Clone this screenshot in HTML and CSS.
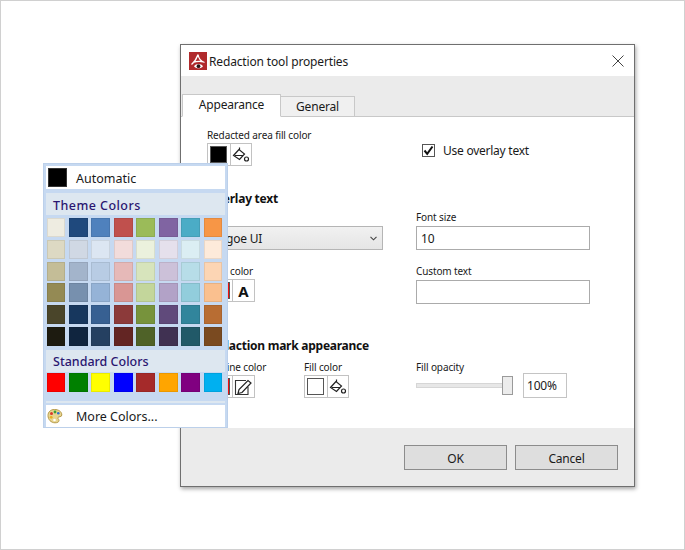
FILE: index.html
```html
<!DOCTYPE html>
<html>
<head>
    <meta charset="utf-8" />
    <title>Redaction tool properties</title>
    <link rel="stylesheet" href="styles.css">
</head>
<body>
    <div class="dialog">
        <div class="title_bar">
            <svg class="app_icon" width="18" height="18" viewBox="0 0 18 18">
                <rect width="18" height="18" fill="#b02a2c" />
                <path d="M9 2.5C8 5 7 9 2.5 12.5M9 2.5C9.5 6 11 9 15.5 10.5M4 10.5C7 9.5 11 9 14.5 10" fill="none" stroke="#fff" stroke-width="1.3" />
                <path d="M5 14.2C7 11.4 12 11.4 14 14.2C12 17 7 17 5 14.2Z" fill="#fff" />
                <circle cx="9.5" cy="14.2" r="1.9" fill="#2a1414" />
            </svg>
            <span class="title_text">Redaction tool properties</span>
            <svg class="close_icon" width="12" height="12" viewBox="0 0 12 12">
                <path d="M.5 .5L11.5 11.5M11.5 .5L.5 11.5" fill="none" stroke="#444" stroke-width="1" />
            </svg>
        </div>

        <div class="tab_strip">
            <div class="tab tab_active">Appearance</div>
            <div class="tab">General</div>
        </div>

        <div class="content">
            <div class="form_grid">
                <div>
                    <div class="label label_tight">Redacted area fill color</div>
                    <div class="btn_group">
                        <div class="cell"><span class="color_box box_black"></span></div>
                        <div class="cell">
                            <svg width="18" height="18" viewBox="0 0 18 18"><use href="#bucket" /></svg>
                        </div>
                    </div>
                </div>
                <label class="check_row">
                    <span class="check_box">
                        <svg width="11" height="11" viewBox="0 0 11 11"><path d="M1.5 5.5L4.2 8.8L9.5 1.5" fill="none" stroke="#111" stroke-width="2" /></svg>
                    </span>
                    Use overlay text
                </label>
            </div>

            <div class="heading heading_first">Overlay text</div>
            <div class="form_grid">
                <div>
                    <div class="label">Font</div>
                    <div class="select_box">
                        <span>Segoe UI</span>
                        <svg width="7" height="5" viewBox="0 0 7 5"><path d="M.5 .8L3.5 3.8L6.5 .8" fill="none" stroke="#444" stroke-width="1.1" /></svg>
                    </div>
                </div>
                <div>
                    <div class="label">Font size</div>
                    <div class="text_input">10</div>
                </div>
                <div class="row_gap">
                    <div class="label label_tight">Font color</div>
                    <div class="btn_group">
                        <div class="cell cell_wide"><span class="color_box box_red"></span></div>
                        <div class="cell cell_letter">A</div>
                    </div>
                </div>
                <div class="row_gap">
                    <div class="label">Custom text</div>
                    <div class="text_input"></div>
                </div>
            </div>

            <div class="heading heading_second">Redaction mark appearance</div>
            <div class="mark_grid">
                <div>
                    <div class="label label_tight">Outline color</div>
                    <div class="btn_group">
                        <div class="cell cell_wide"><span class="color_box box_red"></span></div>
                        <div class="cell">
                            <svg width="18" height="18" viewBox="0 0 18 18">
                                <path d="M12 2.5H1.5V16.5H14V9" fill="none" stroke="#333" stroke-width="1.1" />
                                <path d="M4 15.5L5 11.5L14 2.5L17 5L8 14.5Z" fill="#fff" stroke="#222" stroke-width="1.2" />
                            </svg>
                        </div>
                    </div>
                </div>
                <div>
                    <div class="label label_tight">Fill color</div>
                    <div class="btn_group">
                        <div class="cell"><span class="color_box box_empty"></span></div>
                        <div class="cell">
                            <svg width="18" height="18" viewBox="0 0 18 18"><use href="#bucket" /></svg>
                        </div>
                    </div>
                </div>
                <div>
                    <div class="label label_tight">Fill opacity</div>
                    <div class="opacity_row">
                        <div class="slider"><div class="slider_thumb"></div></div>
                        <div class="percent_input">100%</div>
                    </div>
                </div>
            </div>
        </div>

        <div class="footer">
            <div class="push_btn">OK</div>
            <div class="push_btn">Cancel</div>
        </div>
    </div>

    <div class="color_menu">
        <div class="menu_row">
            <span class="auto_box"></span>
            <span class="menu_text">Automatic</span>
        </div>
        <div class="menu_head menu_head_theme">Theme Colors</div>
        <div class="swatch_grid">
            <span class="swatch" style="background:#eeece1"></span>
            <span class="swatch" style="background:#1f497d"></span>
            <span class="swatch" style="background:#4f81bd"></span>
            <span class="swatch" style="background:#c0504d"></span>
            <span class="swatch" style="background:#9bbb59"></span>
            <span class="swatch" style="background:#8064a2"></span>
            <span class="swatch" style="background:#4bacc6"></span>
            <span class="swatch" style="background:#f79646"></span>

            <span class="swatch" style="background:#ddd9c3"></span>
            <span class="swatch" style="background:#d0d8e4"></span>
            <span class="swatch" style="background:#dce6f2"></span>
            <span class="swatch" style="background:#f2dcdb"></span>
            <span class="swatch" style="background:#ebf1dd"></span>
            <span class="swatch" style="background:#e5e0ec"></span>
            <span class="swatch" style="background:#dbeef3"></span>
            <span class="swatch" style="background:#fdeada"></span>

            <span class="swatch" style="background:#c4bd97"></span>
            <span class="swatch" style="background:#a3b4cb"></span>
            <span class="swatch" style="background:#b8cce4"></span>
            <span class="swatch" style="background:#e6b9b8"></span>
            <span class="swatch" style="background:#d7e4bc"></span>
            <span class="swatch" style="background:#ccc1d9"></span>
            <span class="swatch" style="background:#b7dde8"></span>
            <span class="swatch" style="background:#fcd5b4"></span>

            <span class="swatch" style="background:#948a54"></span>
            <span class="swatch" style="background:#7790ae"></span>
            <span class="swatch" style="background:#95b3d7"></span>
            <span class="swatch" style="background:#d99694"></span>
            <span class="swatch" style="background:#c3d69b"></span>
            <span class="swatch" style="background:#b2a2c7"></span>
            <span class="swatch" style="background:#92cddc"></span>
            <span class="swatch" style="background:#fac08f"></span>

            <span class="swatch" style="background:#4a452a"></span>
            <span class="swatch" style="background:#17375e"></span>
            <span class="swatch" style="background:#376092"></span>
            <span class="swatch" style="background:#8c3a3a"></span>
            <span class="swatch" style="background:#77933c"></span>
            <span class="swatch" style="background:#604a7b"></span>
            <span class="swatch" style="background:#31859c"></span>
            <span class="swatch" style="background:#b86d33"></span>

            <span class="swatch" style="background:#1d1b10"></span>
            <span class="swatch" style="background:#10253f"></span>
            <span class="swatch" style="background:#254061"></span>
            <span class="swatch" style="background:#632523"></span>
            <span class="swatch" style="background:#4f6228"></span>
            <span class="swatch" style="background:#403152"></span>
            <span class="swatch" style="background:#215968"></span>
            <span class="swatch" style="background:#7a4a20"></span>
        </div>
        <div class="menu_head menu_head_standard">Standard Colors</div>
        <div class="swatch_grid swatch_grid_standard">
            <span class="swatch" style="background:#ff0000"></span>
            <span class="swatch" style="background:#008000"></span>
            <span class="swatch" style="background:#ffff00"></span>
            <span class="swatch" style="background:#0000ff"></span>
            <span class="swatch" style="background:#a52a2a"></span>
            <span class="swatch" style="background:#ffa500"></span>
            <span class="swatch" style="background:#800080"></span>
            <span class="swatch" style="background:#00b0f0"></span>
        </div>
        <div class="menu_sep"></div>
        <div class="menu_row menu_row_more">
            <svg class="palette_icon" width="16" height="16" viewBox="0 0 16 16">
                <path d="M7.5 1.5C3.5 1.5 1 4 1 7.5C1 11.5 4 14.8 8 14.8C10.5 14.8 12 14 12 12.5C12 11 10.5 10.8 11 9.5C11.5 8.3 14.8 9.3 14.8 7C14.8 3.5 11.5 1.5 7.5 1.5Z" fill="#e8d590" stroke="#b59a4a" stroke-width="1" />
                <circle cx="4.5" cy="5.5" r="1.5" fill="#d93a2b" />
                <circle cx="8" cy="4" r="1.4" fill="#3f9e3a" />
                <circle cx="11.3" cy="5.3" r="1.3" fill="#2f6fd0" />
                <circle cx="4.2" cy="9.3" r="1.4" fill="#e8b020" />
                <circle cx="7.5" cy="12" r="1.3" fill="#fff" />
            </svg>
            <span class="menu_text">More Colors...</span>
        </div>
    </div>

    <svg class="svg_defs" width="0" height="0">
        <symbol id="bucket" viewBox="0 0 18 18">
            <path d="M7.5 1.5V4M7 3.5L1.5 9.5L7.5 13.5L12.5 8Z" fill="#fff" stroke="#222" stroke-width="1.2" />
            <path d="M3 9.5H11" stroke="#222" stroke-width="1" />
            <circle cx="14.5" cy="13" r="2" fill="#fff" stroke="#222" stroke-width="1.2" />
        </symbol>
    </svg>
</body>
</html>
```
FILE: styles.css
```css
*
{
    margin: 0;
    padding: 0;
    box-sizing: border-box;
}

body
{
    position: relative;
    width: 685px;
    height: 550px;
    overflow: hidden;
    background: #fff;
    border: 1px solid #d0d0d0;
    font-family: "Noto Sans", "Liberation Sans", sans-serif;
    letter-spacing: -0.2px;
    color: #1a1a1a;
}

.svg_defs
{
    position: absolute;
}

/* dialog window */
.dialog
{
    position: absolute;
    left: 179px;
    top: 43px;
    width: 455px;
    height: 443px;
    display: flex;
    flex-direction: column;
    background: #fff;
    border: 1px solid #6f6f6f;
    box-shadow: 1px 2px 4px rgba(0, 0, 0, 0.35);
}

.title_bar
{
    flex: none;
    height: 31px;
    display: flex;
    align-items: center;
    padding: 0 10px 0 8px;
    font-size: 12px;
    letter-spacing: -0.15px;
}

.title_text
{
    margin: 2px 0 0 2px;
    flex: 1;
}

.tab_strip
{
    flex: none;
    height: 41px;
    display: flex;
    align-items: flex-end;
    padding-left: 1px;
    background: #ebebeb;
    border-bottom: 1px solid #c8c8c8;
}

.tab
{
    width: 74px;
    height: 21px;
    margin-bottom: -1px;
    text-align: center;
    font-size: 12px;
    line-height: 19px;
    background: #f0f0f0;
    border: 1px solid #c8c8c8;
    border-left: none;
}

.tab_active
{
    width: 99px;
    height: 23px;
    background: #fff;
    border: 1px solid #c8c8c8;
    border-bottom: 1px solid #fff;
    position: relative;
}

.content
{
    flex: 1;
    padding: 11px 0 0 26px;
}

.form_grid
{
    display: grid;
    grid-template-columns: 209px 174px;
}

.label
{
    height: 14px;
    margin-bottom: 2px;
    font-size: 10px;
    letter-spacing: -0.12px;
    line-height: 14px;
}

.label_tight
{
    margin-bottom: 1px;
}

.btn_group
{
    display: flex;
    width: fit-content;
    height: 23px;
    border: 1px solid #c2c2c2;
}

.cell
{
    width: 21.5px;
    display: flex;
    align-items: center;
    justify-content: center;
}

.cell + .cell
{
    border-left: 1px solid #c2c2c2;
}

.cell_wide
{
    width: 24px;
    justify-content: flex-start;
}

.cell_wide .color_box
{
    width: 20px;
    margin-left: 2px;
}

.cell_letter
{
    width: 22px;
    font-size: 15px;
    font-weight: 700;
    letter-spacing: 0;
    color: #111;
}

.color_box
{
    width: 17px;
    height: 17px;
    border: 1px solid #555;
}

.box_black
{
    background: #000;
}

.box_red
{
    background: #f01010;
}

.box_empty
{
    background: #fff;
}

.check_row
{
    display: flex;
    align-items: center;
    height: 16px;
    margin: 14px 0 0 6px;
    font-size: 12px;
    letter-spacing: -0.25px;
    white-space: nowrap;
}

.check_box
{
    width: 13px;
    height: 13px;
    margin-right: 8px;
    display: flex;
    align-items: center;
    justify-content: center;
    border: 1px solid #555;
    background: #fff;
}

.heading
{
    height: 16px;
    font-size: 12px;
    font-weight: 700;
    letter-spacing: -0.25px;
    line-height: 16px;
    color: #111;
}

.heading_first
{
    margin-top: 25px;
    margin-bottom: 3px;
}

.heading_second
{
    margin-top: 34px;
    margin-bottom: 6px;
}

.select_box
{
    width: 176px;
    height: 24px;
    display: flex;
    align-items: center;
    justify-content: space-between;
    padding: 0 5px;
    font-size: 12px;
    background: linear-gradient(#f1f1f1, #e5e5e5);
    border: 1px solid #b5b5b5;
}

.text_input
{
    width: 174px;
    height: 24px;
    padding-left: 4px;
    font-size: 12px;
    line-height: 24px;
    border: 1px solid #ababab;
    background: #fff;
}

.row_gap
{
    margin-top: 14px;
}

.mark_grid
{
    display: grid;
    grid-template-columns: 97px 112px 160px;
}

.opacity_row
{
    display: flex;
    align-items: center;
    height: 26px;
    margin-top: -3px;
}

.slider
{
    position: relative;
    width: 97px;
    height: 5px;
    background: #e7e7e7;
    border: 1px solid #d6d6d6;
}

.slider_thumb
{
    position: absolute;
    right: -1px;
    top: -8px;
    width: 11px;
    height: 19px;
    background: #ececec;
    border: 1px solid #9a9a9a;
}

.percent_input
{
    width: 44px;
    height: 25px;
    margin-left: 10px;
    padding-left: 3px;
    font-size: 12px;
    line-height: 23px;
    border: 1px solid #c4c4c4;
}

.footer
{
    flex: none;
    height: 58px;
    display: flex;
    justify-content: flex-end;
    gap: 8px;
    padding: 17px 16px 0 0;
    background: #ebebeb;
}

.push_btn
{
    width: 103px;
    height: 25px;
    text-align: center;
    font-size: 12px;
    line-height: 25px;
    background: #dedede;
    border: 1px solid #8c8c8c;
}

/* color dropdown, lies over the dialog */
.color_menu
{
    position: absolute;
    left: 42px;
    top: 162px;
    width: 185px;
    height: 265px;
    padding: 2px 2px 0;
    background: #c6d9f1;
    border: 1px solid #bcd0ea;
    letter-spacing: 0;
}

.menu_row
{
    height: 23px;
    display: flex;
    align-items: center;
    background: #fff;
}

.auto_box
{
    width: 19px;
    height: 19px;
    margin-left: 2px;
    background: #000;
    border: 1px solid #333;
}

.menu_text
{
    position: absolute;
    left: 32px;
    margin-top: 2px;
    font-size: 12.5px;
}

.menu_head
{
    height: 22px;
    padding-left: 7px;
    font-size: 12.5px;
    font-weight: 500;
    line-height: 24px;
    color: #2a1670;
    background: #dde7f0;
}

.menu_head_theme
{
    margin-top: 4px;
    margin-bottom: 3px;
    line-height: 26px;
    letter-spacing: 0.45px;
}

.menu_head_standard
{
    margin-top: 4px;
}

.swatch_grid
{
    display: grid;
    grid-template-columns: repeat(8, 18.6px);
    column-gap: 3.9px;
    row-gap: 2.8px;
    padding-left: 0.5px;
}

.swatch_grid_standard
{
    margin-top: 1px;
}

.swatch
{
    height: 19px;
    box-shadow: inset 0 0 0 1px rgba(0, 0, 0, 0.08);
}

.menu_sep
{
    height: 2px;
    margin-top: 9px;
    background: #dde7f0;
}

.menu_row_more
{
    height: 22px;
    margin-top: 2px;
}

.palette_icon
{
    margin-left: 1px;
}
```
